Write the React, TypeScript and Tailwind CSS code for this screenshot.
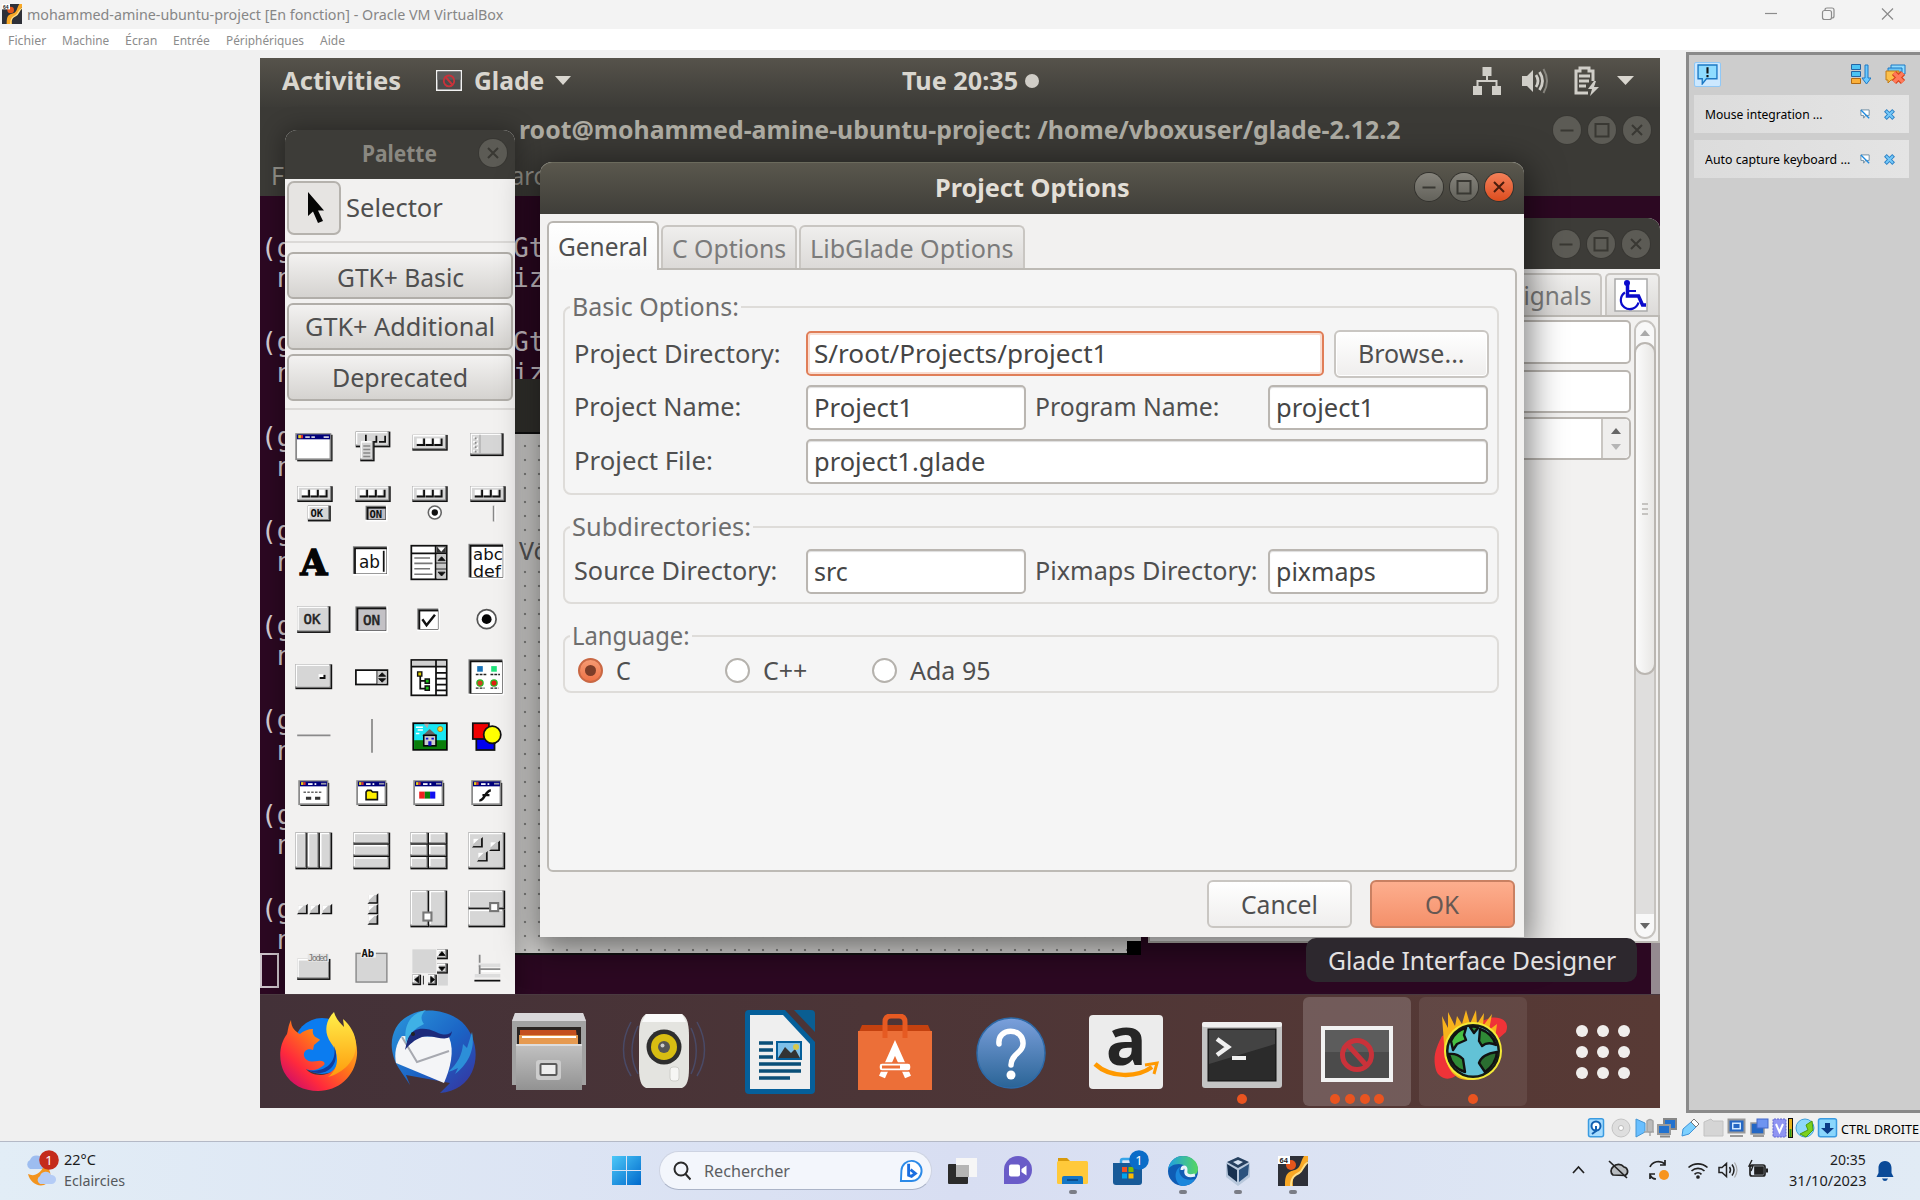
import React, { useLayoutEffect, useRef, useState } from "react";

/* Text stretched horizontally so that it occupies exactly `w` pixels. */
function T({ w, className = "", children }: { w: number; className?: string; children: string }) {
  const ref = useRef<HTMLSpanElement>(null);
  const [k, setK] = useState(1);
  useLayoutEffect(() => {
    if (ref.current) setK(w / ref.current.offsetWidth);
  }, [w]);
  return (
    <span className="inline-block shrink-0 whitespace-nowrap text-left leading-none" style={{ width: w }}>
      <span ref={ref} className={"inline-block origin-left leading-none " + className} style={{ transform: `scaleX(${k})` }}>
        {children}
      </span>
    </span>
  );
}

const UB = "text-[25px] text-[#4f4f4f]";
const TERM = "text-[27px] text-[#d5ccd2] font-['DejaVu_Sans_Mono']";

/* ---------- Window buttons ---------- */

function WinButton({ kind, active }: { kind: "min" | "max" | "close"; active?: boolean }) {
  const hot = active && kind === "close";
  const skin = hot
    ? "bg-linear-to-b from-[#f38058] to-[#dc4c1c] ring-[#33322e]"
    : active
      ? "bg-linear-to-b from-[#86847c] to-[#63625b] ring-[#33322e]"
      : "bg-[#5c5b55] ring-[#383733]";
  return (
    <span className={"flex size-[28px] items-center justify-center rounded-full ring-1 " + skin}>
      <svg viewBox="0 0 28 28" className="size-[28px]" fill="none" stroke={hot ? "#4a1c0c" : "#393833"} strokeWidth="2">
        {kind === "min" && <path d="M7.5 14.5h13" />}
        {kind === "max" && <rect x="7.5" y="8" width="13" height="12.5" />}
        {kind === "close" && <path d="M9 9l10 10M19 9L9 19" />}
      </svg>
    </span>
  );
}

function WinButtons({ active }: { active?: boolean }) {
  return (
    <div className="flex gap-[7px]">
      <WinButton kind="min" active={active} />
      <WinButton kind="max" active={active} />
      <WinButton kind="close" active={active} />
    </div>
  );
}

/* ---------- Palette icons, drawn on a 24 unit grid ---------- */

function Raised({ x, y, w, h, fill = "#d6d6d6" }: { x: number; y: number; w: number; h: number; fill?: string }) {
  return (
    <g>
      <rect x={x} y={y} width={w} height={h} fill="#111" />
      <rect x={x} y={y} width={w - 0.8} height={h - 0.8} fill="#8a8a8a" />
      <rect x={x} y={y} width={w - 1.6} height={h - 1.6} fill="#fff" />
      <rect x={x + 0.9} y={y + 0.9} width={w - 2.5} height={h - 2.5} fill={fill} />
    </g>
  );
}

function Sunken({ x, y, w, h, fill = "#fff" }: { x: number; y: number; w: number; h: number; fill?: string }) {
  return (
    <g>
      <rect x={x} y={y} width={w} height={h} fill="#fff" />
      <rect x={x} y={y} width={w - 1} height={h - 1} fill="#777" />
      <rect x={x + 0.7} y={y + 0.7} width={w - 1.7} height={h - 1.7} fill="#111" />
      <rect x={x + 1.7} y={y + 1.7} width={w - 2.9} height={h - 2.9} fill={fill} />
    </g>
  );
}

function ToolStrip({ y }: { y: number }) {
  return (
    <g>
      <Raised x={2.5} y={y} w={20.2} h={9} />
      {[5, 10, 15].map((x) => (
        <path key={x} d={`M${x} ${y + 5.8}h4.2v-3.8`} fill="none" stroke="#111" strokeWidth="1.1" />
      ))}
      {[5, 10, 15].map((x) => (
        <rect key={x} x={x} y={y + 2} width="3" height="3" fill="#fff" />
      ))}
    </g>
  );
}

function MiniWindow({ children }: { children?: React.ReactNode }) {
  return (
    <g>
      <rect x="4.2" y="6.2" width="16.5" height="13.2" fill="#111" />
      <rect x="3.5" y="5.2" width="16.2" height="13.2" fill="#fff" stroke="#8a8a8a" strokeWidth="1" />
      <rect x="4" y="5.4" width="15.4" height="2.8" fill="#00007a" />
      <rect x="4.6" y="5.8" width="1.4" height="1.6" fill="#e8d21c" />
      <rect x="6" y="5.8" width="1.2" height="1.6" fill="#d33" />
      <rect x="8.6" y="6.4" width="2.6" height="1" fill="#fff" />
      <rect x="12.3" y="6.4" width="1" height="1" fill="#fff" />
      <rect x="16" y="6.2" width="3" height="1" fill="#99a" />
      {children}
    </g>
  );
}

const mono = "'DejaVu Sans Mono', monospace";
const smallBox = (x: number, y: number) => (
  <g key={`${x}-${y}`}>
    <path d={`M${x + 6} ${y - 1}v6h-6.2z`} fill="#111" />
    <path d={`M${x + 0.6} ${y}h4.4v4.2h-4.4z`} fill="#c2c2c2" />
    <path d={`M${x + 0.6} ${y}h3.2l-3.2 3z`} fill="#fff" />
  </g>
);

const paletteIcons: React.ReactNode[] = [
  <>
    <rect x="2.4" y="5" width="20.2" height="15.2" fill="#111" />
    <rect x="1.8" y="4.6" width="19.6" height="14.4" fill="#fff" stroke="#888" strokeWidth="1" />
    <rect x="2.2" y="4.8" width="19" height="2.8" fill="#00007a" />
    <rect x="3" y="5.2" width="1.6" height="1.8" fill="#e8d21c" />
    <rect x="4.5" y="5.2" width="1.2" height="1.8" fill="#d33" />
    <path d="M7 6.3h2.6M10.5 6.3h2M17.5 6.3h3" stroke="#ccd" strokeWidth="1" />
  </>,
  <>
    <Raised x={2.7} y={3.2} w={19.8} h={9} />
    <path d="M8.5 9V5M11 9h3.5V5.5M16 9h3.5V5.5" fill="none" stroke="#111" />
    <Raised x={5.3} y={8.6} w={8.2} h={11.6} />
    <path d="M7 11.4h4M7 13.4h4M7 15.4h4M7 17.4h4" stroke="#888" strokeWidth=".8" />
  </>,
  <ToolStrip y={5.1} />,
  <>
    <Raised x={2.5} y={4.2} w={19} h={13} />
    <path d="M4.6 6v9M6.4 7v8" stroke="#fff" strokeDasharray="1.2 1.3" />
    <path d="M5.5 6.6v9" stroke="#888" strokeDasharray="1 1.5" />
    <path d="M8 5v10.5" stroke="#aaa" strokeWidth=".7" />
  </>,
  <>
    <ToolStrip y={1.3} />
    <Raised x={8.5} y={12.4} w={13.1} h={9} />
    <text x="10" y="18.6" fontSize="6" fontWeight="bold" fontFamily={mono} fill="#111">OK</text>
  </>,
  <>
    <ToolStrip y={1.3} />
    <Sunken x={8.3} y={12.4} w={12.6} h={9} fill="#bdbdc4" />
    <text x="10.6" y="19.4" fontSize="6" fontWeight="bold" fontFamily={mono} fill="#111">ON</text>
  </>,
  <>
    <ToolStrip y={1.3} />
    <circle cx="15.3" cy="16.3" r="3.7" fill="#fff" stroke="#666" strokeWidth=".9" />
    <circle cx="15.3" cy="16.3" r="1.8" fill="#111" />
  </>,
  <>
    <ToolStrip y={1.3} />
    <path d="M15.8 12.4v9" stroke="#888" />
    <path d="M16.6 12.4v9" stroke="#fff" strokeWidth=".7" />
  </>,
  <text x="11.9" y="19.3" textAnchor="middle" fontSize="20" fontWeight="bold" fontFamily="'DejaVu Serif', serif" fill="#050505" stroke="#050505" strokeWidth=".8">A</text>,
  <>
    <Sunken x={1.1} y={3} w={20.4} h={16.8} />
    <text x="4.6" y="15.6" fontSize="10.5" textLength="12" lengthAdjust="spacingAndGlyphs" fontFamily="'DejaVu Sans', sans-serif" fill="#111">ab</text>
    <path d="M18.7 5.6v12" stroke="#111" />
  </>,
  <>
    <rect x="1.9" y="2.7" width="20.2" height="19.2" fill="#fff" stroke="#111" />
    <path d="M1.9 7h20.2M15.8 2.7v19.2" stroke="#111" />
    <rect x="16.4" y="3.2" width="5.2" height="3.6" fill="#333" />
    <path d="M16.8 3.6h4.4l-2.2 2.6z" fill="#fff" />
    <rect x="16.4" y="7.6" width="5.2" height="13.8" fill="#c8c8c8" />
    <path d="M17.2 11.2h4l-2-2.2zM17.2 17.8h4l-2 2.2zM16 12.6h6M16 16h6" fill="#111" stroke="#111" strokeWidth=".5" />
    <path d="M3.6 9.7h9M3.6 12.8h10.4M3.6 15.9h9M3.6 19h10.4" stroke="#777" strokeWidth=".9" />
  </>,
  <>
    <Sunken x={1.4} y={1.6} w={20.8} h={20.2} />
    <text x="4" y="11" fontSize="9" textLength="17" lengthAdjust="spacingAndGlyphs" fontFamily="'DejaVu Sans', sans-serif" fill="#111">abc</text>
    <text x="4" y="20.3" fontSize="9" textLength="16" lengthAdjust="spacingAndGlyphs" fontFamily="'DejaVu Sans', sans-serif" fill="#111">def</text>
  </>,
  <>
    <Raised x={2.4} y={4.2} w={19} h={15.2} />
    <text x="6" y="14.2" fontSize="8" fontFamily={mono} fill="#222" stroke="#222" strokeWidth=".3">OK</text>
  </>,
  <>
    <Sunken x={2.5} y={4.2} w={18.6} h={15} fill="#c3c1c5" />
    <text x="6.8" y="15" fontSize="8.2" fontFamily={mono} fill="#222" stroke="#222" strokeWidth=".3">ON</text>
  </>,
  <>
    <Sunken x={5.3} y={5.4} w={13} h={13} />
    <path d="M8.2 11.6l2.4 3.4 4.8-6" fill="none" stroke="#111" strokeWidth="1.4" />
  </>,
  <>
    <circle cx="11.8" cy="11.5" r="5.4" fill="#fff" stroke="#555" strokeWidth="1" />
    <circle cx="11.8" cy="11.5" r="2.8" fill="#050505" />
  </>,
  <>
    <Raised x={1.4} y={4.2} w={21} h={14.2} />
    <rect x="14.6" y="9.8" width="4" height="2.8" fill="#fff" />
    <path d="M15.2 12h2.8v-1.8" fill="none" stroke="#111" strokeWidth="1.2" />
  </>,
  <>
    <rect x="2.8" y="7.5" width="18" height="8.2" fill="#fff" stroke="#111" />
    <rect x="14.8" y="8" width="5.6" height="7.2" fill="#ccc" />
    <path d="M14.8 7.5v8.2M15.8 11h4l-2-2zM15.8 12.4h4l-2 2z" fill="#111" stroke="#111" strokeWidth=".5" />
  </>,
  <>
    <rect x="1.9" y="1.7" width="20.2" height="20.2" fill="#fff" stroke="#111" />
    <rect x="2.4" y="2.2" width="19.2" height="3" fill="#d0d0d0" />
    <path d="M1.9 5.5h20.2M16 1.7v20.2M16 9h6M16 12.4h6M16 15.8h6M16 19h6M7 10v8h4M7 13.6h4" fill="none" stroke="#111" />
    <path d="M5.5 8.5h2.4v2.4h-2.4z" fill="#d8c800" stroke="#111" strokeWidth=".8" />
    <path d="M9.8 12.6h2.4v2.4h-2.4zM9.8 16.6h2.4v2.4h-2.4z" fill="#1ac21a" stroke="#111" strokeWidth=".8" />
  </>,
  <>
    <Sunken x={1.4} y={1.3} w={20.4} h={20.6} />
    <rect x="6.4" y="5.2" width="3.2" height="3.2" fill="#1672b8" />
    <rect x="14.4" y="5.2" width="3.2" height="3.2" fill="#1fe37a" />
    <path d="M5.6 10h6M14 10h5.4M5.6 17.8h5M14 17.8h4.6" stroke="#222" strokeDasharray="1.6 .6" strokeWidth=".8" />
    <circle cx="8" cy="14.9" r="1.8" fill="#d04020" stroke="#2b2" strokeWidth=".7" />
    <circle cx="16" cy="14.9" r="1.8" fill="#e02010" stroke="#2b2" strokeWidth=".7" />
  </>,
  <path d="M2.4 11.6h19" stroke="#8a8a8a" />,
  <path d="M12 2.3v19.2" stroke="#8a8a8a" />,
  <>
    <rect x="3" y="4.7" width="19.2" height="15.2" fill="#19e6f2" stroke="#050505" />
    <path d="M3.5 14.4h18.2v5.1H3.5z" fill="#0a7d0a" />
    <path d="M4.5 7h4M5.5 8.6h3M4.5 10.6h2" stroke="#fff" strokeWidth=".9" />
    <path d="M9 5h3l-1 2.6z" fill="#aaa" />
    <path d="M8 12l4.4-4 4.4 4z" fill="#666" />
    <rect x="9" y="11.6" width="7" height="6" fill="#ccc" stroke="#050505" strokeWidth=".9" />
    <path d="M10.2 13h1.4v1h-1.4zM13.4 13h1.4v1h-1.4zM11.6 15h1.8v2.6h-1.8z" fill="#11c" />
    <circle cx="18.4" cy="8" r="1.5" fill="#f8d820" stroke="#a60" strokeWidth=".4" />
  </>,
  <>
    <rect x="5.9" y="13" width="10.4" height="7" fill="#0000f0" stroke="#111" />
    <rect x="3.9" y="4.7" width="9.2" height="9" fill="#f00000" stroke="#111" />
    <circle cx="15" cy="11.3" r="4.9" fill="#ff0" stroke="#111" />
  </>,
  <MiniWindow>
    <path d="M6 11.6h10.6" stroke="#666" strokeDasharray="1.4 .8" strokeWidth=".8" />
    <path d="M7.4 15h3M12.6 15h3" stroke="#333" strokeWidth="1.6" />
  </MiniWindow>,
  <MiniWindow>
    <path d="M8.6 15.8v-4.4l.8-.9h2l.9.9h2.8v4.4z" fill="#ffef00" stroke="#111" strokeWidth=".9" />
  </MiniWindow>,
  <MiniWindow>
    <path d="M6.4 11.2h3.2v4h-3.2z" fill="#f02020" />
    <path d="M9.6 11.2h3v4h-3z" fill="#0b800b" />
    <path d="M12.6 11.2h3v4h-3z" fill="#1010f0" />
  </MiniWindow>,
  <MiniWindow>
    <path d="M7.6 16.2c3 .6 3.4-5.8 6.6-5.6M9.4 13.2h4" fill="none" stroke="#111" strokeWidth="1.4" />
  </MiniWindow>,
  <>
    <Raised x={1.4} y={1.5} w={7} h={21} />
    <Raised x={8.4} y={1.5} w={7} h={21} />
    <Raised x={15.4} y={1.5} w={7} h={21} />
  </>,
  <>
    <Raised x={1.4} y={1.5} w={21} h={7} />
    <Raised x={1.4} y={8.5} w={21} h={7} />
    <Raised x={1.4} y={15.5} w={21} h={7} />
  </>,
  <>
    {[1.5, 8.5, 15.5].map((y) => (
      <g key={y}>
        <Raised x={1.4} y={y} w={10.6} h={7} />
        <Raised x={12} y={y} w={10.6} h={7} />
      </g>
    ))}
  </>,
  <>
    <Raised x={1.4} y={1.5} w={21} h={21} />
    {smallBox(3.6, 5)}
    {smallBox(13.4, 7)}
    {smallBox(6.4, 13)}
  </>,
  <>{[2.4, 9.4, 16.4].map((x) => smallBox(x, 10))}</>,
  <>{[4, 10, 16].map((y) => smallBox(9.6, y))}</>,
  <>
    <Raised x={1.4} y={1.5} w={10.8} h={21} />
    <Raised x={12.2} y={1.5} w={10.2} h={21} />
    <rect x="8.8" y="14" width="4.6" height="4.6" fill="#fff" stroke="#777" strokeWidth="1.2" />
  </>,
  <>
    <Raised x={1.4} y={1.5} w={21} h={10.8} />
    <Raised x={1.4} y={12.3} w={21} h={10.2} />
    <rect x="13.8" y="8.6" width="4.6" height="4.6" fill="#fff" stroke="#777" strokeWidth="1.2" />
  </>,
  <>
    <Raised x={2.4} y={7.4} w={19} h={12} />
    <rect x="8.4" y="4.4" width="12" height="4.6" fill="#e4e4e4" />
    <text x="8.6" y="8.6" fontSize="5" fontFamily={mono} fill="#777" textLength="11.4">Joded</text>
  </>,
  <>
    <rect x="2.9" y="4.2" width="17.6" height="16.4" fill="#d6d6d6" stroke="#888" strokeWidth=".8" />
    <rect x="5.6" y="2" width="8.6" height="4.6" fill="#f2f1f0" />
    <text x="6" y="6.5" fontSize="6" fontWeight="bold" fontFamily={mono} fill="#111">Ab</text>
  </>,
  <>
    <rect x="2.5" y="1.9" width="13.6" height="13.6" fill="#d6d6d6" />
    <rect x="17" y="16" width="5.8" height="6.6" fill="#d6d6d6" />
    <Raised x={16.6} y={2} w={6.2} h={5.6} />
    <Raised x={16.6} y={10} w={6.2} h={5.8} />
    <Raised x={2.5} y={16.4} w={5} h={6} />
    <Raised x={11.5} y={16.4} w={5} h={6} />
    <path d="M17.6 5.4h3.6l-1.8-2.2zM17.6 12h3.6l-1.8 2.2zM6 17.4v3.6l-2.2-1.8zM13 17.4v3.6l2.2-1.8zM8.8 17v5" fill="#050505" stroke="#111" strokeWidth=".5" />
  </>,
  <>
    <path d="M4.8 19.8h14.8" stroke="#111" strokeWidth="1" />
    <path d="M5 17h14.6M7 11h12.6" stroke="#ddd" strokeWidth="2" />
    <path d="M7.8 5v4.5M7.8 11v5M7.8 13.2h11.8" stroke="#888" fill="none" />
    <path d="M8.8 14.4h10.8" stroke="#fff" />
  </>,
];

/* ---------- Dialog widgets ---------- */

function Field({ w, text, tw, focus }: { w: string; text: string; tw: number; focus?: boolean }) {
  return (
    <div
      className={
        "flex h-[45px] items-center rounded-[5px] border-2 bg-white pl-[6px] " +
        w +
        (focus ? " border-[#e07e58] shadow-[inset_0_0_0_2px_#f9ddd1]" : " border-[#bab6b1] shadow-[inset_0_1px_1px_#ddd]")
      }
    >
      <T w={tw} className="text-[25px] text-[#454545]">{text}</T>
    </div>
  );
}

function Frame({ title, tw, className, children }: { title: string; tw: number; className: string; children: React.ReactNode }) {
  return (
    <div className={"relative shrink-0 rounded-[8px] border-2 border-[#dedcd9] " + className}>
      <span className="absolute -top-[18px] left-[5px] flex h-[32px] items-center bg-[#f5f5f5] px-[2px]">
        <T w={tw} className="text-[25px] text-[#6e6e6e]">{title}</T>
      </span>
      {children}
    </div>
  );
}

function Radio({ on, label, tw, className }: { on?: boolean; label: string; tw: number; className: string }) {
  return (
    <label className={"flex items-center gap-[13px] " + className}>
      <span
        className={
          "flex size-[25px] items-center justify-center rounded-full border-2 " +
          (on ? "border-[#c96844] bg-linear-to-b from-[#f59a72] to-[#ee7347]" : "border-[#b5b2ad] bg-white")
        }
      >
        {on && <span className="size-[11px] rounded-full bg-[#7c3d28]" />}
      </span>
      <T w={tw} className={UB}>{label}</T>
    </label>
  );
}

function ProjectDialog() {
  return (
    <section className="absolute left-[280px] top-[104px] flex h-[775px] w-[984px] flex-col rounded-t-[12px] bg-[#f2f1f0] shadow-[0_8px_34px_6px_rgba(0,0,0,0.5)]">
      <header className="flex h-[52px] shrink-0 items-center rounded-t-[12px] border-t border-[#6b6a5c] bg-linear-to-b from-[#5a574d] to-[#3f3e39] pb-[3px] pr-[11px]">
        <span className="w-[395px]" />
        <T w={195} className="text-[25px] font-bold text-[#e3dfd7]">Project Options</T>
        <span className="grow" />
        <WinButtons active />
      </header>
      <nav className="flex h-[54px] shrink-0 items-end gap-[2px] pl-[7px]">
        <div className="relative z-10 -mb-[2px] flex h-[49px] w-[112px] items-center rounded-t-[6px] border-2 border-b-0 border-[#b9b6b1] bg-linear-to-b from-white to-[#f6f6f6] pl-[9px]">
          <T w={90} className={UB}>General</T>
        </div>
        <div className="flex h-[43px] w-[136px] items-center rounded-t-[6px] border-2 border-b-0 border-[#c9c6c2] bg-linear-to-b from-[#efeeed] to-[#dcdad8] pl-[9px] pt-[1px]">
          <T w={114} className="text-[25px] text-[#7b7b7b]">C Options</T>
        </div>
        <div className="flex h-[43px] w-[226px] items-center rounded-t-[6px] border-2 border-b-0 border-[#c9c6c2] bg-linear-to-b from-[#efeeed] to-[#dcdad8] pl-[9px] pt-[1px]">
          <T w={204} className="text-[25px] text-[#7b7b7b]">LibGlade Options</T>
        </div>
      </nav>
      <div className="mx-[7px] flex h-[604px] shrink-0 flex-col rounded-[6px] rounded-tl-none border-2 border-[#bdbab5] bg-[#f5f5f5] px-[14px] pt-[36px]">
        <Frame title="Basic Options:" tw={167} className="flex h-[189px] w-[936px] flex-col gap-[9px] pl-[9px] pt-[23px]">
          <div className="flex h-[45px] items-center">
            <T w={207} className={UB}>Project Directory:</T>
            <Field w="ml-[25px] w-[518px]" text="S/root/Projects/project1" tw={294} focus />
            <div className="ml-[10px] flex h-[48px] w-[155px] items-center justify-center rounded-[6px] border-2 border-[#c9c6c2] bg-linear-to-b from-white to-[#efeeed] shadow-[inset_0_0_0_1px_#fff]">
              <T w={107} className={UB}>Browse...</T>
            </div>
          </div>
          <div className="flex h-[45px] items-center">
            <div className="w-[232px]"><T w={167} className={UB}>Project Name:</T></div>
            <Field w="w-[220px]" text="Project1" tw={99} />
            <div className="w-[242px] pl-[9px]"><T w={184} className={UB}>Program Name:</T></div>
            <Field w="w-[220px]" text="project1" tw={98} />
          </div>
          <div className="flex h-[45px] items-center">
            <div className="w-[232px]"><T w={139} className={UB}>Project File:</T></div>
            <Field w="w-[682px]" text="project1.glade" tw={171} />
          </div>
        </Frame>
        <Frame title="Subdirectories:" tw={179} className="mt-[31px] h-[78px] w-[936px] pl-[9px] pt-[21px]">
          <div className="flex h-[45px] items-center">
            <div className="w-[232px]"><T w={203} className={UB}>Source Directory:</T></div>
            <Field w="w-[220px]" text="src" tw={34} />
            <div className="w-[242px] pl-[9px]"><T w={223} className={UB}>Pixmaps Directory:</T></div>
            <Field w="w-[220px]" text="pixmaps" tw={100} />
          </div>
        </Frame>
        <Frame title="Language:" tw={118} className="mt-[31px] flex h-[58px] w-[936px] items-center pl-[13px] pt-[12px]">
          <Radio on label="C" tw={15} className="w-[147px]" />
          <Radio label="C++" tw={44} className="w-[147px]" />
          <Radio label="Ada 95" tw={80} className="w-[147px]" />
        </Frame>
      </div>
      <footer className="flex grow items-center justify-end gap-[18px] pb-[1px] pr-[9px]">
        <button className="flex h-[48px] w-[145px] items-center justify-center rounded-[6px] border-2 border-[#c9c6c2] bg-linear-to-b from-white to-[#efeeed]">
          <T w={77} className={UB}>Cancel</T>
        </button>
        <button className="flex h-[48px] w-[145px] items-center justify-center rounded-[6px] border-2 border-[#c98062] bg-linear-to-b from-[#fdae8e] to-[#f4906a] pr-[2px]">
          <T w={34} className="text-[25px] text-[#665853]">OK</T>
        </button>
      </footer>
    </section>
  );
}

function PaletteButton({ text, tw, className = "" }: { text: string; tw: number; className?: string }) {
  return (
    <div className={"mx-[2px] flex h-[47px] shrink-0 items-center justify-center rounded-[6px] border-2 border-[#b1aea9] bg-linear-to-b from-[#f3f2f1] to-[#d5d3d0] " + className}>
      <T w={tw} className={UB}>{text}</T>
    </div>
  );
}

function Palette() {
  return (
    <section className="absolute left-[25px] top-[72px] flex h-[864px] w-[230px] flex-col rounded-t-[12px] bg-[#f2f1f0] shadow-[0_2px_22px_4px_rgba(0,0,0,0.3)]">
      <header className="flex h-[49px] shrink-0 items-center rounded-t-[12px] bg-[#3d3c38] pb-[3px] pl-[77px] pr-[8px]">
        <T w={75} className="text-[24px] font-bold text-[#8a8881]">Palette</T>
        <span className="grow" />
        <WinButton kind="close" />
      </header>
      <div className="flex h-[64px] shrink-0 items-center gap-[5px] border-b-2 border-[#dbd9d7] pb-[5px] pl-[2px]">
        <span className="flex size-[54px] items-center justify-center rounded-[7px] border-2 border-[#b5b2ad] bg-[#e6e4e2]">
          <svg viewBox="0 0 18 32" className="ml-[3px] h-[32px] w-[18px]">
            <path d="M1 0v24l5-4.5 5 11.5 5-2-5-10.5h6z" fill="#050505" />
          </svg>
        </span>
        <T w={97} className={UB}>Selector</T>
      </div>
      <PaletteButton text="GTK+ Basic" tw={127} className="mt-[9px] pt-[3px]" />
      <PaletteButton text="GTK+ Additional" tw={190} className="mt-[4px]" />
      <PaletteButton text="Deprecated" tw={136} className="mt-[4px]" />
      <div className="mt-[7px] h-[2px] shrink-0 bg-[#dbd9d7]" />
      <div className="mt-[8px] grid grid-cols-[repeat(4,57.75px)] auto-rows-[57.75px]">
        {paletteIcons.map((icon, i) => (
          <div key={i} className="flex items-center justify-center">
            <svg viewBox="0 0 24 24" className="size-[42px] overflow-visible">{icon}</svg>
          </div>
        ))}
      </div>
    </section>
  );
}

/* ---------- Background windows ---------- */

const termRows: [string, string][] = [
  ["(g", "Gt"], [" n", "iz"], ["(g", "Gt"], [" n", "iz"], ["(g", ""], [" n", ""], ["(g", ""], [" n", ""],
  ["(g", ""], [" n", ""], ["(g", ""], [" n", ""], ["(g", ""], [" n", ""], ["(g", ""], [" n", ""],
];

function Terminal() {
  return (
    <section className="absolute left-0 top-[49px] flex h-[887px] w-[1400px] flex-col bg-[#2c0822]">
      <header className="flex h-[47px] shrink-0 items-center bg-[#3b3a36] pb-[2px] pl-[259px] pr-[9px]">
        <T w={881} className="text-[25px] font-bold text-[#aeaca3]">root@mohammed-amine-ubuntu-project: /home/vboxuser/glade-2.12.2</T>
        <span className="grow" />
        <WinButtons />
      </header>
      <div className="flex h-[42px] shrink-0 items-center bg-[#3b3a36] pl-[11px]">
        <T w={13} className="text-[25px] text-[#96948c]">F</T>
        <span className="w-[227px]" />
        <T w={34} className="text-[25px] text-[#96948c]">arc</T>
      </div>
      <div className="mt-[35px] flex flex-col">
        {termRows.map(([a, b], i) => (
          <div key={i} className={"flex whitespace-pre " + (i % 2 ? "h-[62.5px] items-start pt-[1px]" : "h-[32px] items-center")}>
            <span className="w-[1px]" />
            <T w={32} className={TERM + " whitespace-pre"}>{a}</T>
            <span className="w-[220px]" />
            {b && <T w={32} className={TERM}>{b}</T>}
          </div>
        ))}
      </div>
    </section>
  );
}

function FormWindow() {
  return (
    <section className="absolute left-[240px] top-[321px] flex h-[576px] w-[641px] flex-col">
      <header className="h-[53px] shrink-0 bg-[#34332f]" />
      <div className="relative grow border-y-2 border-[#111] bg-[#dddcda] bg-[radial-gradient(circle_at_11px_12px,#8a8a88_1.2px,transparent_1.6px)] bg-[size:14px_14px] pl-[19px] pt-[104px]">
        <T w={30} className="text-[25px] text-[#5a5a5a]">Vo</T>
        <span className="absolute -bottom-[2px] right-0 size-[14px] bg-black" />
      </div>
    </section>
  );
}

function PropertiesWindow() {
  return (
    <section className="absolute left-[888px] top-[160px] flex h-[725px] w-[512px] flex-col rounded-tr-[12px] bg-[#f2f1f0]">
      <header className="flex h-[51px] shrink-0 items-center justify-end rounded-tr-[12px] bg-[#3d3c38] pr-[10px]">
        <WinButtons />
      </header>
      <nav className="flex h-[46px] shrink-0 items-end justify-end gap-[3px]">
        <div className="flex h-[42px] w-[150px] items-center justify-end rounded-t-[5px] border-2 border-b-0 border-[#c9c6c2] bg-linear-to-b from-[#efeeed] to-[#dcdad8] pr-[9px]">
          <T w={81} className="text-[25px] text-[#7b7b7b]">Signals</T>
        </div>
        <div className="flex h-[42px] w-[55px] items-center justify-center rounded-t-[5px] border-2 border-b-0 border-[#c9c6c2] bg-linear-to-b from-[#efeeed] to-[#dcdad8] pr-[3px]">
          <svg viewBox="0 0 34 34" className="size-[34px]">
            <rect x="1" y="1" width="32" height="32" fill="#fff" stroke="#aaa" strokeWidth="1.5" />
            <circle cx="13" cy="5" r="3" fill="#0a0acc" />
            <path d="M13.5 7v11h11l4 9h3.5" fill="none" stroke="#0a0acc" strokeWidth="3.5" />
            <path d="M14 13h8" stroke="#0a0acc" strokeWidth="2" />
            <path d="M11 14.5a9 9 0 1 0 13.5 10" fill="none" stroke="#0a0acc" strokeWidth="2.2" />
          </svg>
        </div>
      </nav>
      <div className="flex grow justify-end gap-[3px] border-2 border-[#bdbab5] bg-[#f2f1f0] pb-[2px] pr-[2px] pt-[3px]">
        <div className="flex w-[300px] flex-col gap-[6px]">
          <div className="h-[44px] rounded-[5px] border-2 border-[#bab6b1] bg-white" />
          <div className="h-[43px] rounded-[5px] border-2 border-[#bab6b1] bg-white" />
          <div className="-mt-[2px] flex h-[43px] rounded-[6px] border-2 border-[#bab6b1] bg-white">
            <span className="grow" />
            <span className="flex w-[28px] flex-col items-center justify-center gap-[10px] rounded-r-[5px] border-l-2 border-[#c9c6c2] bg-[#efeeed]">
              <svg viewBox="0 0 10 6" className="h-[6px] w-[10px]"><path d="M0 6h10L5 0z" fill="#666" /></svg>
              <svg viewBox="0 0 10 6" className="h-[6px] w-[10px]"><path d="M0 0h10L5 6z" fill="#b5b5b5" /></svg>
            </span>
          </div>
        </div>
        <div className="flex w-[22px] flex-col items-center rounded-full border-2 border-[#c6c3bf] bg-[#dfdedd]">
          <div className="flex h-[30px] w-full shrink-0 justify-center rounded-t-full bg-[#f8f8f8] pt-[8px]">
            <svg viewBox="0 0 10 6" className="h-[6px] w-[10px]"><path d="M0 6h10L5 0z" fill="#aaa" /></svg>
          </div>
          <div className="-mt-[10px] flex h-[333px] w-[22px] shrink-0 flex-col items-center justify-center gap-[3px] rounded-full border-2 border-[#bab6b1] bg-linear-to-r from-[#fbfbfb] to-[#e8e7e5]">
            <span className="h-[2px] w-[6px] bg-[#c5c3c0]" />
            <span className="h-[2px] w-[6px] bg-[#c5c3c0]" />
            <span className="h-[2px] w-[6px] bg-[#c5c3c0]" />
          </div>
          <span className="grow" />
          <div className="flex h-[23px] w-full items-center justify-center rounded-b-full bg-[#f8f8f8]">
            <svg viewBox="0 0 10 6" className="h-[6px] w-[10px]"><path d="M0 0h10L5 6z" fill="#666" /></svg>
          </div>
        </div>
      </div>
    </section>
  );
}

/* ---------- Dock ---------- */

const Firefox = () => (
  <svg viewBox="0 0 78 80" className="ml-[2px] h-[80px] w-[78px]">
    <defs>
      <linearGradient id="ff1" x1="0" y1="1" x2="1" y2="0">
        <stop offset="0" stopColor="#b5007f" /><stop offset=".3" stopColor="#ff2a3c" /><stop offset=".6" stopColor="#ff7a18" /><stop offset="1" stopColor="#ffd92e" />
      </linearGradient>
      <linearGradient id="ff2" x1="0" y1="0" x2="0" y2="1">
        <stop offset="0" stopColor="#fff04a" /><stop offset="1" stopColor="#ff9a0c" />
      </linearGradient>
    </defs>
    <circle cx="42" cy="34" r="28" fill="#0b7cf0" />
    <path d="M11 8c-3 6-3 11-4 14C-2 34-1 50 4 60c7 13 20 19 34 19 20 0 37-14 39-36 1-14-5-26-13-35 3 10 2 18-4 26 1 22-9 29-20 29-6 0-12-3-14-6 8 3 13 0 18-4 2-3-2-5-6-4-6 1-12 1-14-5-1-6 5-8 9-6l1-5 6-5c0-2-9-2-7-11-5 0-10 2-13 5-4-2-9-6-9-14z" fill="url(#ff1)" />
    <path d="M54 0c-8 8-11 20-3 31 8 10 9 25-3 34 15-4 28-16 28-32 0-11-6-20-13-26l1 8C60 11 56 7 54 0z" fill="url(#ff2)" />
    <path d="M28 58c6 4 17 5 24-3 5-6 5-15 2-21 4 20-14 27-26 24z" fill="#123c9c" />
  </svg>
);

const Thunderbird = () => (
  <svg viewBox="0 0 86 84" className="h-[84px] w-[86px]">
    <defs>
      <linearGradient id="tb" x1="0" y1="0" x2="1" y2="1">
        <stop offset="0" stopColor="#2a97dc" /><stop offset=".55" stopColor="#1b62c4" /><stop offset="1" stopColor="#3a2f9c" />
      </linearGradient>
    </defs>
    <path d="M10 60c-14-20-10-46 10-55C34-3 58 0 72 12c14 14 17 34 10 50-5 11-16 20-32 21l10-10-44-8 4 10z" fill="url(#tb)" />
    <path d="M12 26l47 1c6 14 1 32-5 46L6 53c-2-9 0-20 6-27z" fill="#f4f5f7" />
    <path d="M12 27l15 25 32-11" fill="none" stroke="#a7a9b0" strokeWidth="2" />
    <path d="M18 27c5-10 18-10 28-5 8 4 14 3 16-1-2 15-18 2-30 6-8 3-12 7-17 13z" fill="#1c2b7c" />
    <path d="M36 0C20 3 13 16 16 34c3-13 14-18 18-20-4-5-3-10 2-14z" fill="#3fb1e6" />
    <path d="M82 22c4 19-6 34-17 42l3-6c-4 2-7 3-10 4 10-9 14-17 15-28l4 4z" fill="#2c8fd8" />
    <circle cx="23" cy="24" r="2" fill="#222" />
  </svg>
);

const Files = () => (
  <svg viewBox="0 0 74 78" className="h-[78px] w-[74px]">
    <defs>
      <linearGradient id="fl" x1="0" y1="0" x2="0" y2="1"><stop offset="0" stopColor="#c2c2c2" /><stop offset="1" stopColor="#929292" /></linearGradient>
    </defs>
    <path d="M3 0h68l3 8v64H0V8z" fill="#a2a2a2" />
    <path d="M3 0h68l3 8H0z" fill="#d9d7da" />
    <rect x="5" y="14" width="64" height="20" fill="#2a2422" />
    <path d="M8 17h56l2 17H8z" fill="#c4501f" />
    <path d="M7 22h59v12H7z" fill="#e69a50" />
    <path d="M10 23h54v2H10z" fill="#fff" />
    <path d="M4 31h66v46H4z" fill="url(#fl)" />
    <path d="M4 31h66v2H4z" fill="#ddd" />
    <rect x="24" y="47" width="25" height="20" rx="3" fill="#ccc" />
    <rect x="28.5" y="51" width="16" height="11" rx="1" fill="#eee" stroke="#5a5a5a" strokeWidth="2" />
  </svg>
);

const Speaker = () => (
  <svg viewBox="0 0 84 76" className="h-[76px] w-[84px]">
    <path d="M9 8C-1 26-1 46 9 62M16 12C8 28 8 46 16 60M75 8c10 18 10 38 0 54M69 14c7 14 7 32 0 46" fill="none" stroke="#4a5f96" strokeWidth="1.5" opacity=".5" />
    <path d="M24 0h36c5 3 7 10 7 22v32c0 12-2 18-7 20H24c-5-2-7-8-7-20V22C17 10 19 3 24 0z" fill="#e4e4e0" />
    <path d="M24 0h36l4 8H20z" fill="#fafafa" />
    <circle cx="42" cy="33" r="17.5" fill="#2e2e2e" />
    <circle cx="42" cy="33" r="13" fill="#d8bd12" />
    <circle cx="42" cy="33" r="6" fill="#555" />
    <circle cx="40.5" cy="31.5" r="2" fill="#ccc" />
    <rect x="48" y="53" width="9" height="14" rx="3" fill="#f6f6f4" stroke="#cfcfca" />
  </svg>
);

const Writer = () => (
  <svg viewBox="0 0 70 84" className="h-[84px] w-[70px]">
    <path d="M4 0h36l30 32v48q0 4-4 4H4q-4 0-4-4V4q0-4 4-4z" fill="#055f9a" />
    <path d="M49 0h17q4 0 4 4v18z" fill="#0a5e92" />
    <path d="M5 5h33l27 29v45H5z" fill="#efefef" />
    <path d="M14 33h14M14 40h14M14 47h14M14 54h42M14 61h42M14 68h31" stroke="#0a4f78" strokeWidth="3.6" />
    <rect x="32" y="32" width="24" height="17" fill="#7ec0e8" stroke="#055f9a" strokeWidth="2" />
    <path d="M33 48l7-11 6 6 4-4 5 9z" fill="#333" />
    <circle cx="51" cy="37" r="3" fill="#d8c84a" />
  </svg>
);

const Software = () => (
  <svg viewBox="0 0 74 76" className="h-[76px] w-[74px]">
    <path d="M4 11h66l4 9H0z" fill="#c4410f" />
    <path d="M0 17h74v59H0z" fill="#ec6f38" />
    <path d="M27 24V8q0-6 6-6h8q6 0 6 6v16" fill="none" stroke="#e65a22" strokeWidth="5" />
    <path d="M24 63L37 34l13 29" fill="none" stroke="#fff" strokeWidth="6.5" />
    <rect x="21" y="49" width="32" height="8" rx="3" fill="#fff" stroke="#ec6f38" strokeWidth="1.5" />
    <path d="M24 53h18" stroke="#ec6f38" strokeWidth="3" />
  </svg>
);

const Help = () => (
  <svg viewBox="0 0 70 72" className="h-[72px] w-[70px]">
    <defs>
      <linearGradient id="hp" x1="0" y1="0" x2="0" y2="1"><stop offset="0" stopColor="#7ba0dc" /><stop offset="1" stopColor="#2a6496" /></linearGradient>
    </defs>
    <ellipse cx="35" cy="36" rx="34" ry="35" fill="url(#hp)" stroke="#2d6aa8" strokeWidth="1.5" />
    <path d="M23 27c-2-17 25-17 24 0 0 9-12 10-12 21" fill="none" stroke="#fff" strokeWidth="5.5" strokeLinecap="round" />
    <circle cx="35" cy="58" r="4.5" fill="#fff" />
  </svg>
);

const Amazon = () => (
  <div className="relative flex h-[74px] w-[74px] justify-center rounded-[4px] bg-[#ececec]">
    <span className="-mt-[15px] h-[80px] font-['Open_Sans',sans-serif] text-[68px] font-bold leading-[78px] text-[#262626]">a</span>
    <svg viewBox="0 0 74 74" className="absolute left-0 top-0 size-[74px]">
      <path d="M6 49c15 14 42 14 57 3" fill="none" stroke="#f90" strokeWidth="4.5" />
      <path d="M56 50l12-2-3 11" fill="none" stroke="#f90" strokeWidth="3" />
    </svg>
  </div>
);

const TerminalIcon = () => (
  <svg viewBox="0 0 80 66" className="h-[66px] w-[80px]">
    <rect width="80" height="66" rx="3" fill="#c4c4c4" />
    <rect width="80" height="5" rx="2" fill="#efefef" />
    <rect x="6" y="7" width="68" height="52" fill="#2b2b2b" stroke="#111" />
    <path d="M7 8h66v14L7 42z" fill="#434343" />
    <path d="M15 17l11 8-11 8" fill="none" stroke="#f0f0f0" strokeWidth="4.5" />
    <path d="M30 36h14" stroke="#f0f0f0" strokeWidth="4" />
  </svg>
);

const GladeIcon = ({ className }: { className: string }) => (
  <svg viewBox="0 0 72 56" preserveAspectRatio="none" className={className}>
    <rect x="2" y="2" width="68" height="52" fill="#4b4b4b" stroke="#f2f2f2" strokeWidth="4" />
    <rect x="4" y="4" width="64" height="22" fill="#5c5c5c" />
    <circle cx="36" cy="29" r="14.5" fill="none" stroke="#c9323a" strokeWidth="5" />
    <path d="M26 18l20 22" stroke="#c9323a" strokeWidth="5" />
  </svg>
);

const FireGlobe = () => (
  <svg viewBox="0 0 78 76" className="h-[76px] w-[78px]">
    <path d="M56 10c12-2 20 4 16 14L24 66c-8 8-19 5-22-4-4-14 1-24 6-34z" fill="#ef3338" />
    <path d="M10 36L8 8l6 12V4l7 14 2-10 5 8 4-14 4 14 6-14 1 14 7-11-1 13 9-12-3 16 8-6-3 22c4 18-6 33-24 34S10 56 10 36z" fill="#f7b21c" />
    <circle cx="39" cy="43" r="29" fill="#f4ea38" />
    <circle cx="39" cy="43" r="27" fill="#151b16" />
    <circle cx="39" cy="43" r="24.5" fill="#62c2d6" />
    <g fill="#2f8a36" stroke="#111" strokeWidth="2.4" strokeLinejoin="round">
      <path d="M17 33q5-11 15-13l-2 7 2 5-9 4-4 6z" fill="#47c144" />
      <path d="M36 19q5-1 8 1l-4 5z" />
      <path d="M46 21q12 4 16 16-8-4-14 1l-3-5z" />
      <path d="M63 44q-1 12-12 20l-6-9q3-9 18-11z" fill="#2a6e30" />
      <path d="M15 46q8-1 14 5l2 13q-13-4-16-18z" />
    </g>
  </svg>
);

function Dots({ n }: { n: number }) {
  return (
    <span className="absolute bottom-[2px] left-0 flex w-full justify-center gap-[4.7px]">
      {Array.from({ length: n }, (_, i) => (
        <span key={i} className="size-[10px] rounded-full bg-[#e95420]" />
      ))}
    </span>
  );
}

function Dock() {
  const apps: { icon: React.ReactNode; n?: number; bg?: string; pad?: string }[] = [
    { icon: <Firefox /> },
    { icon: <Thunderbird /> },
    { icon: <Files /> },
    { icon: <Speaker /> },
    { icon: <Writer /> },
    { icon: <Software /> },
    { icon: <Help />, pad: "pt-[3px]" },
    { icon: <Amazon /> },
    { icon: <TerminalIcon />, n: 1, pad: "pt-[6px]" },
    { icon: <GladeIcon className="h-[56px] w-[72px]" />, n: 4, bg: "bg-white/18", pad: "pt-[5px]" },
    { icon: <FireGlobe />, n: 1, bg: "bg-white/8", pad: "pb-[12px]" },
  ];
  return (
    <div className="absolute bottom-0 left-0 flex h-[114px] w-[1400px] items-center border-t border-[#4a3a40] bg-linear-to-r from-[#433138] to-[#583a35]">
      {apps.map((a, i) => (
        <div key={i} className="flex w-[115.5px] shrink-0 justify-center">
          <div className={"relative flex h-[109px] w-[108px] items-center justify-center rounded-[6px] " + (a.bg ?? "") + " " + (a.pad ?? "")}>
            {a.icon}
            {a.n && <Dots n={a.n} />}
          </div>
        </div>
      ))}
      <div className="ml-[45px] grid grid-cols-3 gap-x-[9px] gap-y-[9px]">
        {Array.from({ length: 9 }, (_, i) => (
          <span key={i} className="size-[12px] rounded-full bg-[#f0eeec]" />
        ))}
      </div>
    </div>
  );
}

function TopBar() {
  return (
    <div className="absolute left-0 top-0 flex h-[49px] w-[1400px] items-center bg-linear-to-b from-[#56534b] to-[#3c3b37] pb-[4px] pl-[22px] pr-[26px]">
      <T w={119} className="text-[25px] font-bold text-[#d9d6cf]">Activities</T>
      <span className="w-[35px]" />
      <GladeIcon className="h-[21px] w-[26px]" />
      <span className="w-[12px]" />
      <T w={70} className="text-[25px] font-bold text-[#d9d6cf]">Glade</T>
      <svg viewBox="0 0 16 9" className="ml-[11px] h-[9px] w-[16px]"><path d="M0 0h16L8 9z" fill="#d9d6cf" /></svg>
      <span className="w-[331px]" />
      <T w={116} className="text-[25px] font-bold text-[#d9d6cf]">Tue 20:35</T>
      <span className="ml-[7px] size-[14px] rounded-full bg-[#d0cdc7]" />
      <span className="grow" />
      <svg viewBox="0 0 28 28" className="h-[28px] w-[28px]" fill="#d0cec8">
        <path d="M9.5 0h9v9h-9zM0 19h9v9H0zM19 19h9v9h-9z" />
        <path d="M14 8v6M4.5 20v-6h19v6" fill="none" stroke="#d0cec8" strokeWidth="2" />
      </svg>
      <svg viewBox="0 0 28 26" className="ml-[20px] h-[26px] w-[28px]">
        <path d="M1 8h5l6-6v22l-6-6H1z" fill="#d0cec8" />
        <path d="M15 7q4 6 0 12M18.5 4q6 9 0 18" fill="none" stroke="#d0cec8" strokeWidth="2.8" />
        <path d="M22.5 1q7 12 0 24" fill="none" stroke="#85837c" strokeWidth="2" />
      </svg>
      <svg viewBox="0 0 26 30" className="ml-[25px] h-[30px] w-[26px]" fill="none" stroke="#d0cec8" strokeWidth="3">
        <path d="M14 27H2V5h4V2h9v3h4v10" />
        <path d="M5 10h11M5 15h10M5 20h7" strokeWidth="3" />
        <path d="M20 15l-6 8h4l-2 7 9-9h-5l2-6z" fill="#d0cec8" stroke="none" />
      </svg>
      <svg viewBox="0 0 17 9" className="ml-[17px] h-[9px] w-[17px]"><path d="M0 0h17L8.5 9z" fill="#d9d6cf" /></svg>
    </div>
  );
}

function VirtualMachine() {
  return (
    <div className="relative ml-[260px] h-[1050px] w-[1400px] shrink-0 overflow-hidden bg-[#2c0822] font-['Noto_Sans',sans-serif]">
      <TopBar />
      <Terminal />
      <span className="absolute left-0 top-[895px] h-[35px] w-[19px] border-2 border-[#cfc5cc]" />
      <span className="absolute left-[1391px] top-[885px] h-[51px] w-[9px] bg-[#948a90]" />
      <FormWindow />
      <PropertiesWindow />
      <Palette />
      <ProjectDialog />
      <div className="absolute left-[1046px] top-[880px] flex h-[44px] w-[331px] items-center justify-center rounded-[10px] bg-[#2d282e]">
        <T w={288} className="text-[25px] text-[#e4e1e2]">Glade Interface Designer</T>
      </div>
      <Dock />
    </div>
  );
}

/* ---------- Notification side panel ---------- */

function Notice({ text, tw }: { text: string; tw: number }) {
  return (
    <div className="flex h-[38px] w-[215px] items-center bg-linear-to-r from-[#dcdcdc] to-[#e4e4e4] pl-[11px] pr-[14px]">
      <span className="mb-[2px] flex"><T w={tw} className="text-[12px] text-black">{text}</T></span>
      <span className="grow" />
      <svg viewBox="0 0 12 12" className="size-[11px]">
        <path d="M1 1h9v6H6L4 10V7H1z" fill="#fff" stroke="#6a8aa0" />
        <path d="M1 1l9 9" stroke="#1e8be0" strokeWidth="1.5" />
      </svg>
      <svg viewBox="0 0 12 12" className="ml-[13px] size-[11px]">
        <path d="M3 3l6 6M9 3l-6 6" stroke="#2a7fc4" strokeWidth="4.2" strokeLinecap="square" />
        <path d="M3 3l6 6M9 3l-6 6" stroke="#74c8f8" strokeWidth="2.2" strokeLinecap="square" />
      </svg>
    </div>
  );
}

function SidePanel() {
  return (
    <aside className="ml-[26px] mt-[-6px] h-[1061px] w-[234px] shrink-0 border-y-[3px] border-l-[3px] border-[#8a8a8a] bg-[#cdcdcd] pl-[5px] pt-[7px] font-['Noto_Sans',sans-serif]">
      <div className="mb-[8px] flex h-[25px] items-center pr-[14px]">
        <span className="flex h-[25px] w-[27px] items-center justify-center rounded-[2px] border border-[#90c8f6] bg-[#cce8ff]">
          <svg viewBox="0 0 20 20" className="size-[21px]">
            <path d="M1 1h18v13H9l-4 5v-5H1z" fill="#8fdcff" stroke="#1d78c4" strokeWidth="1.3" />
            <path d="M10 3v6M10 10.5v2" stroke="#111" strokeWidth="2" />
          </svg>
        </span>
        <span className="grow" />
        <svg viewBox="0 0 20 21" className="h-[21px] w-[20px]">
          <path d="M.5.5h9v5h-9zM.5 7.5h9v5h-9z" fill="#4cc4f4" stroke="#2464a4" />
          <path d="M.5 14.5h9v5h-9z" fill="#fbb03a" stroke="#b06a14" />
          <path d="M14 1h3v13h3l-4.500 6-4.500-6h3z" fill="#6ccaff" stroke="#1d78c4" />
        </svg>
        <svg viewBox="0 0 21 21" className="ml-[14px] size-[21px]">
          <path d="M6 1h14v9H6z" fill="#8fdcff" stroke="#1d78c4" />
          <path d="M3 4h14v9H3z" fill="#6cc4f4" stroke="#1d78c4" />
          <path d="M1 7h13v9H6l-3 3v-3H1z" fill="#fbc04a" stroke="#c07a14" />
          <path d="M9 9l9 9M18 9l-9 9" stroke="#d8421c" strokeWidth="6" />
          <path d="M9 9l9 9M18 9l-9 9" stroke="#ff7a5a" strokeWidth="3.5" />
        </svg>
      </div>
      <Notice text="Mouse integration ..." tw={118} />
      <div className="h-[7px]" />
      <Notice text="Auto capture keyboard ..." tw={145} />
    </aside>
  );
}

/* ---------- VirtualBox status bar ---------- */

function StatusBar() {
  return (
    <div className="flex h-[33px] items-center pl-[1587px] pt-[6px] font-['Noto_Sans',sans-serif]">
      <svg viewBox="0 0 252 20" className="h-[20px] w-[252px] shrink-0" fill="none">
        <rect x="1.5" y=".8" width="15" height="18" rx="2" fill="#a6dcff" stroke="#3b9be0" strokeWidth="1.5" />
        <circle cx="9" cy="8" r="4.5" fill="#fff" stroke="#1260b0" strokeWidth="2" />
        <path d="M9 8v5l-4 3" stroke="#1260b0" strokeWidth="2" />
        <circle cx="34" cy="10" r="9" fill="#dedede" stroke="#c4c4c4" />
        <circle cx="34" cy="10" r="2.5" fill="#fff" stroke="#bbb" />
        <path d="M49 1l9 4v9l-9 5z" fill="#69bfff" stroke="#4596d4" />
        <path d="M60 3q3-3 6 0v10q-3 3-6 0zM57 14h10M63 14v4" fill="#bbb" stroke="#a5a5a5" strokeWidth="1.5" />
        <rect x="77" y="1" width="12" height="10" fill="#2272cf" stroke="#888" strokeWidth="2" />
        <rect x="71" y="7" width="12" height="9" fill="#2272cf" stroke="#999" strokeWidth="2" />
        <path d="M73 18.5h10" stroke="#888" strokeWidth="2" />
        <path d="M95 18l1-7 8-7 5 5-7 7z" fill="#7cd0ff" stroke="#3f93d8" />
        <path d="M104 4l3-3 5 5-3 3z" fill="#fff" stroke="#777" />
        <path d="M117 4l7-3 2 2h10v15h-19z" fill="#d5d5d5" stroke="#c2c2c2" />
        <rect x="141.5" y="1.5" width="16" height="13" fill="#2467c4" stroke="#999" strokeWidth="2" />
        <rect x="145" y="4.5" width="9" height="7" fill="#cfe8ff" />
        <rect x="146.5" y="6" width="6" height="4" fill="#2467c4" />
        <path d="M143 18h13" stroke="#999" strokeWidth="2" />
        <rect x="164" y="5" width="13" height="11" fill="#2467c4" stroke="#999" strokeWidth="1.5" />
        <rect x="170" y="1" width="11" height="9" fill="#6e94f0" stroke="#4468c8" />
        <path d="M166 18h11" stroke="#999" strokeWidth="2" />
        <rect x="186" y="1" width="13" height="18" rx="1" fill="#8f94f2" stroke="#5f64d0" strokeDasharray="2 1" />
        <path d="M189 6l3.5 8L196 6" stroke="#fff" strokeWidth="2" />
        <rect x="201.5" y=".5" width="4" height="19" fill="#e8b31c" stroke="#111" />
        <rect x="202.5" y="11" width="2" height="8" fill="#2c9a20" />
        <circle cx="218" cy="10" r="9" fill="#8ed8fa" stroke="#3fa0dc" />
        <path d="M213 16l8-4-2-5 6-4 1 9-7 7z" fill="#7bd11c" stroke="#4c9a10" />
        <rect x="231.5" y=".8" width="18" height="18" rx="2" fill="#8ad6fc" stroke="#3b9be0" strokeWidth="1.5" />
        <path d="M238 5h5v5h4l-6.5 6-6.5-6h4z" fill="#0c3c88" />
      </svg>
      <span className="w-[2px] shrink-0" />
      <T w={78} className="text-[12px] text-black">CTRL DROITE</T>
    </div>
  );
}

/* ---------- Windows taskbar ---------- */

function Vm64({ className }: { className: string }) {
  return (
    <svg viewBox="0 0 30 30" preserveAspectRatio="none" className={className}>
      <rect width="30" height="30" fill="#2e3038" />
      <path d="M7 30c0-13 3-14 10-16 6-2 5-8 9-14h4v5c-5 4-4 9-9 12-5 2-7 5-6 13z" fill="#f9a825" />
      <path d="M13 30c0-9 4-11 8-13s4-8 9-11" fill="none" stroke="#ffe08a" strokeWidth="2" />
      <circle cx="13" cy="9" r="5" fill="#e4561c" />
      <rect width="12" height="8" fill="#fff" />
      <text x="1.5" y="7" fontSize="7.5" fontWeight="bold" fontFamily="'Liberation Sans', sans-serif" fill="#222">64</text>
    </svg>
  );
}

function TaskItem({ running, children }: { running?: boolean; children: React.ReactNode }) {
  return (
    <div className="relative flex h-[58px] w-[55px] items-center justify-center">
      {children}
      {running && <span className="absolute bottom-[6px] left-[24px] h-[4px] w-[8px] rounded-full bg-[#7a7d86]" />}
    </div>
  );
}

function Taskbar() {
  return (
    <footer className="flex h-[59px] items-center border-t border-[#b4b9c6] bg-linear-to-r from-[#e2edf6] via-[#d8def2] to-[#e1ebf5] pb-[1px] font-['Noto_Sans',sans-serif]">
      <svg viewBox="0 0 36 38" className="ml-[24px] mb-[4px] h-[38px] w-[36px] shrink-0">
        <path d="M6 19a5 5 0 0 1 0-9 7 7 0 0 1 13 0 5 5 0 0 1 1 9z" fill="#9dbdf0" />
        <path d="M4 24c6 3 12 0 16-8 9 2 8 16 0 19-7 2-14-3-16-11z" fill="#f2941e" />
        <path d="M16 34a4.500 4.500 0 0 1 0-8 6 6 0 0 1 11-1 4.500 4.500 0 0 1 1 9z" fill="#b4ccf6" />
        <circle cx="25" cy="10" r="9.8" fill="#c42b1c" />
        <text x="25" y="14.5" textAnchor="middle" fontSize="13" fontFamily="'Noto Sans', sans-serif" fill="#fff">1</text>
      </svg>
      <div className="ml-[4px] mb-[2px] flex w-[62px] flex-col gap-[5px]">
        <T w={32} className="text-[14px] text-[#1b1b1b]">22°C</T>
        <T w={61} className="text-[14px] text-[#55585c]">Eclaircies</T>
      </div>
      <svg viewBox="0 0 29 29" className="ml-[486px] size-[29px] shrink-0">
        <defs>
          <linearGradient id="win" x1="0" y1="0" x2="1" y2="1"><stop offset="0" stopColor="#4cc8f8" /><stop offset="1" stopColor="#0069cc" /></linearGradient>
        </defs>
        <path d="M0 0h14v14H0zM15 0h14v14H15zM0 15h14v14H0zM15 15h14v14H15z" fill="url(#win)" />
      </svg>
      <div className="ml-[18px] flex h-[39px] w-[273px] shrink-0 items-center rounded-full border border-[#cdd3e2] border-b-[#abb4c8] bg-[#f3f6fc] pl-[13px] pr-[7px]">
        <svg viewBox="0 0 18 20" className="h-[20px] w-[18px]" fill="none" stroke="#2a2a2a" strokeWidth="2">
          <circle cx="8" cy="8" r="6.5" /><path d="M12.5 13l5 5.5" />
        </svg>
        <span className="w-[13px]" />
        <T w={86} className="text-[16px] text-[#5c5e62]">Rechercher</T>
        <span className="grow" />
        <svg viewBox="0 0 26 26" className="size-[25px]">
          <path d="M2 24l.5-11A10.500 10.500 0 1 1 13 24z" fill="#fff" stroke="#2c8ae8" strokeWidth="2" />
          <path d="M10 6v12l3 1 4-3-5-4" fill="none" stroke="#1c6fe0" strokeWidth="3" />
        </svg>
      </div>
      <div className="ml-[3px] flex">
        <TaskItem>
          <svg viewBox="0 0 30 26" className="h-[26px] w-[30px]">
            <rect x="0" y="6" width="20" height="20" rx="1" fill="#2b2b2b" />
            <rect x="8" y="0" width="21" height="19" fill="#f6f6f6" />
            <rect x="8" y="7" width="13" height="12" fill="#b5b5b5" />
          </svg>
        </TaskItem>
        <TaskItem>
          <svg viewBox="0 0 29 29" className="size-[29px]">
            <path d="M1 28V14A14 14 0 1 1 15 28z" fill="#6a5cc8" />
            <rect x="6" y="8.5" width="11" height="12" rx="2" fill="#fff" />
            <path d="M18.5 13l5-3.5v10l-5-3.5z" fill="#fff" />
          </svg>
        </TaskItem>
        <TaskItem running>
          <svg viewBox="0 0 31 28" className="h-[28px] w-[31px]">
            <path d="M1 1h9l4 4H1z" fill="#d89a0c" />
            <rect x="0" y="4" width="31" height="23" rx="1.5" fill="#ffc93a" />
            <path d="M5 27v-6q0-2 2-2h17q2 0 2 2v6z" fill="#1476c6" />
            <path d="M10 23h11" stroke="#0a4d8c" strokeWidth="2" />
          </svg>
        </TaskItem>
        <TaskItem>
          <svg viewBox="0 0 40 40" className="mb-[6px] ml-[9px] size-[40px] shrink-0">
            <path d="M9 17v-4q0-2 2-2h9q2 0 2 2v4" fill="none" stroke="#36a4e8" strokeWidth="2.5" />
            <path d="M1 15h29v19q0 3-3 3H4q-3 0-3-3z" fill="#185a98" />
            <path d="M10 19h5v5h-5z" fill="#f25022" /><path d="M16.5 19h5v5h-5z" fill="#7fba00" />
            <path d="M10 25.5h5v5h-5z" fill="#00a4ef" /><path d="M16.5 25.5h5v5h-5z" fill="#ffb900" />
            <circle cx="27" cy="12" r="9.8" fill="#0a6cc8" />
            <text x="27" y="16.5" textAnchor="middle" fontSize="13" fontFamily="'Noto Sans', sans-serif" fill="#fff">1</text>
          </svg>
        </TaskItem>
        <TaskItem running>
          <svg viewBox="0 0 30 30" className="size-[30px]">
            <defs>
              <linearGradient id="edge" x1="0" y1="0" x2="1" y2="0"><stop offset="0" stopColor="#1f9fe4" /><stop offset="1" stopColor="#55d660" /></linearGradient>
            </defs>
            <circle cx="15" cy="15" r="15" fill="#0f5cb4" />
            <path d="M0 14C1 6 7 0 15 0c9 0 15 6 15 13 0 5-4 7-8 7-4 0-5-2-4-4 2-5-3-8-7-8-6 0-10 3-11 6z" fill="url(#edge)" />
            <path d="M12 11c-3 8 4 15 15 12-3 5-8 7-13 7C7 28 5 15 12 11z" fill="#1b87dc" />
            <path d="M14 14c0-4 4-4 4 0-1 4 1 7 9 5" fill="none" stroke="#e9f3fb" strokeWidth="3" />
          </svg>
        </TaskItem>
        <TaskItem running>
          <svg viewBox="0 0 26 30" className="h-[30px] w-[26px]">
            <path d="M13 1l12 6v14l-12 9L1 21V7z" fill="#b8c8dc" />
            <path d="M13 1l11 5-11 6L2 6z" fill="#26405f" />
            <path d="M2 8l10 6v12L3 19z" fill="#17304f" /><path d="M24 8l-10 6v12l9-7z" fill="#2c537e" />
            <path d="M8 6l5-2 5 2-5 3z" fill="#d5e2f2" />
          </svg>
        </TaskItem>
        <TaskItem running><Vm64 className="size-[30px]" /></TaskItem>
      </div>
      <span className="grow" />
      <svg viewBox="0 0 204 24" className="mb-[1px] h-[24px] w-[204px] shrink-0" fill="none" stroke="#222" strokeWidth="1.7">
        <path d="M2 15l5.5-6 5.5 6" />
        <path d="M42 17a5 5 0 0 1 0-8 7 7 0 0 1 11 0 4.500 4.500 0 0 1 1 8.500z" fill="#b8bcc0" /><path d="M38 3l18 17" />
        <path d="M79 9a9 8 0 0 1 15-3M94 2v5h-5M79 21v-5h5M79 17q2 4 6 4" />
        <circle cx="93" cy="17" r="5" fill="#f7941e" stroke="none" />
        <path d="M117.500 9.500a14 14 0 0 1 19 0M120.500 13a9.500 9.500 0 0 1 13 0M123.500 16.300a5 5 0 0 1 7 0" />
        <circle cx="127" cy="19" r="1" fill="#222" />
        <path d="M148 9.500h3l4.500-4v13l-4.500-4h-3zM158.500 9q2 3 0 6M161 6.500q4 5.500 0 11" strokeWidth="1.5" />
        <path d="M163.500 4.500q5 7.500 0 15" stroke="#aaa" strokeWidth="1.2" />
        <rect x="179" y="7" width="15" height="11" rx="2" /><path d="M184 9h8v7h-8z" fill="#222" /><path d="M196 10.500v4" strokeWidth="2" />
        <path d="M181 2l-3 6h4l-2 5" strokeWidth="1.4" />
      </svg>
      <div className="mb-[2px] ml-[15px] flex w-[76px] shrink-0 flex-col items-end gap-[5px]">
        <T w={36} className="text-[14px] text-[#1d1d1d]">20:35</T>
        <T w={77} className="text-[14px] text-[#1d1d1d]">31/10/2023</T>
      </div>
      <svg viewBox="0 0 18 20" className="ml-[10px] mr-[26px] h-[20px] w-[18px] shrink-0">
        <path d="M9 0c5 0 6.500 4 6.500 7v5l2 4H.5l2-4V7C2.500 4 4 0 9 0z" fill="#0a4a98" />
        <path d="M6 17.500h6q-1 2.500-3 2.500t-3-2.500z" fill="#0a4a98" />
      </svg>
    </footer>
  );
}

export default function App() {
  const menus: [string, number][] = [["Fichier", 38], ["Machine", 47], ["Écran", 32], ["Entrée", 37], ["Périphériques", 78], ["Aide", 25]];
  return (
    <div className="flex h-[1200px] w-[1920px] flex-col overflow-hidden bg-[#f0f0f0]">
      <header className="flex h-[29px] shrink-0 items-center bg-[#f3f3f3] pb-[2px] pl-[2px] pr-[26px] font-['Noto_Sans',sans-serif]">
        <Vm64 className="h-[20px] w-[20px]" />
        <span className="w-[5px]" />
        <T w={476} className="text-[14px] text-[#868686]">mohammed-amine-ubuntu-project [En fonction] - Oracle VM VirtualBox</T>
        <span className="grow" />
        <svg viewBox="0 0 130 14" className="mt-[1px] h-[14px] w-[130px]" fill="none" stroke="#8c8c8c" strokeWidth="1.2">
          <path d="M1 6.5h12" />
          <rect x="58.5" y="3.5" width="9" height="9" rx="2" /><path d="M61 3.500V3q0-2 2-2h5q2 0 2 2v6q0 2-2 2" />
          <path d="M118 1.500l11 11M129 1.500l-11 11" />
        </svg>
      </header>
      <nav className="flex h-[21px] shrink-0 items-center gap-[16px] bg-white pb-[2px] pl-[8px] font-['Noto_Sans',sans-serif]">
        {menus.map(([m, w]) => (
          <T key={m} w={w} className="text-[12px] text-[#8c8c8c]">{m}</T>
        ))}
      </nav>
      <main className="flex h-[1058px] shrink-0 items-start pt-[8px]">
        <VirtualMachine />
        <SidePanel />
      </main>
      <StatusBar />
      <Taskbar />
    </div>
  );
}
